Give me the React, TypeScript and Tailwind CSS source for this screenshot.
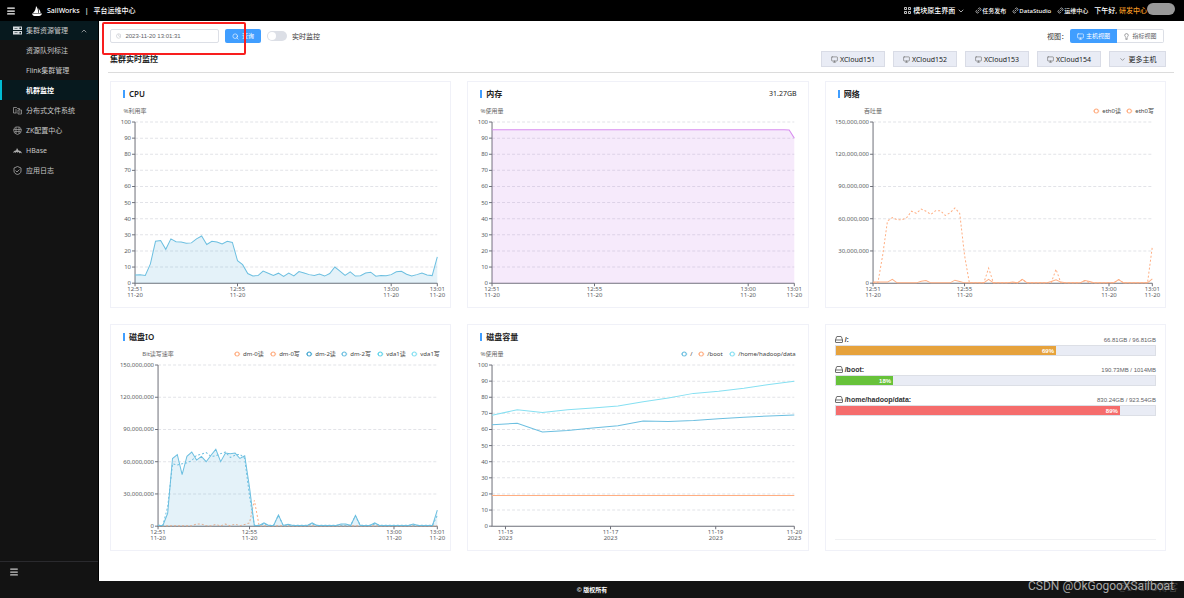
import React from "react";
import {
  ChevronDown,
  ChevronUp,
  Clock,
  Lightbulb,
  Link2,
  Menu,
  Monitor,
  Search,
} from "lucide-react";

type Series = {
  data: number[];
  color: string;
  dashed?: boolean;
  fill?: string;
};

type LegendItem = { label: string; color: string; x: number };
type XTick = { at: number; top: string; bottom: string };

type ChartProps = {
  name: string;
  left: number;
  max: number;
  step: number;
  series: Series[];
  xTicks: XTick[];
  legend?: LegendItem[];
};

const ORANGE = "#ffae82";
const BLUE = "#6cbfe0";
const CYAN = "#86e0f2";

const TOP = 17;
const BOTTOM = 178;
const RIGHT = 326;

const cpu = [
  5, 5.2, 4.8, 12, 26, 26.5, 21, 27.5, 25.7, 25.5, 24.8, 25, 27.5, 29.3, 24,
  26, 25.5, 24.3, 26, 25.3, 14, 11.5, 6, 4.5, 4.7, 7.5, 6.2, 4.8, 6.2, 4.2,
  6.2, 4.5, 7.2, 6.3, 5.3, 4.7, 5.7, 4.4, 6, 10, 7.5, 4.8, 7, 4.4, 4.6, 6.3,
  6.8, 4.3, 4.8, 4.6, 5.3, 7.1, 7.4, 5.5, 4.4, 5.3, 6.3, 5.1, 4.7, 16.3,
];

const memory = [...Array(58).fill(95.2), 95, 90];

// mostly idle series: a base level with a few readings, in millions
function sparse(base: number, points: Record<number, number>) {
  return Array.from({ length: 59 }, (_, i) => (points[i] ?? base) * 1000000);
}

const netRead = sparse(0.3, {
  0: 1, 1: 1, 2: 1, 3: 1, 4: 3.5, 10: 1.8, 11: 2.4, 17: 2.8, 18: 1.6, 24: 3.6,
  29: 1, 31: 3.5, 37: 1.6, 38: 3.2, 39: 1, 44: 2.4, 45: 1.6, 51: 3.4, 58: 4,
});

const netWrite = sparse(0.3, {
  2: 26, 3: 58, 4: 61, 5: 59, 6: 59, 7: 61, 8: 67, 9: 65, 10: 69, 11: 67,
  12: 64, 13: 67.5, 14: 67.5, 15: 63, 16: 65.5, 17: 70, 18: 65, 19: 26,
  24: 14, 31: 3.5, 38: 13, 44: 2.4, 51: 3.4, 58: 34,
});

const dm2Read = sparse(0.6, {
  2: 12, 3: 63, 4: 66.5, 5: 48, 6: 65, 7: 69, 8: 61.5, 9: 65, 10: 60, 11: 66,
  12: 71.5, 13: 60, 14: 68, 15: 67.5, 16: 68, 17: 63, 18: 65.5, 19: 36,
  22: 3, 25: 10.5, 27: 1.8, 32: 3, 38: 2, 39: 2, 41: 10, 45: 3, 53: 2, 58: 15,
});

const dm2Write = sparse(0.8, {
  2: 18, 3: 58, 4: 57, 5: 58, 6: 59, 7: 61, 8: 66, 9: 67, 10: 68.5, 11: 65,
  12: 65.5, 13: 67.5, 14: 69, 15: 64, 16: 66, 17: 67, 18: 63, 19: 28, 22: 2,
  25: 10, 32: 2, 41: 9.5, 45: 2, 58: 10,
});

const dm0Write = sparse(0.3, {
  8: 2, 9: 2, 10: 0.5, 12: 1.6, 14: 2, 16: 2, 18: 1.6, 19: 3, 20: 24,
});

const rootUsed = [63, 63.8, 58.5, 59.3, 60.9, 62.3, 65.2, 65, 65.6, 66.6, 67.6, 68.4, 69];
const dataUsed = [68.8, 72.2, 70.5, 72.2, 73.3, 74.6, 77.2, 79.6, 82.4, 83.7, 85.6, 87.9, 90];

const cpuTicks: XTick[] = [
  { at: 0, top: "12:51", bottom: "11-20" },
  { at: 20 / 59, top: "12:55", bottom: "11-20" },
  { at: 50 / 59, top: "13:00", bottom: "11-20" },
  { at: 1, top: "13:01", bottom: "11-20" },
];

const ioTicks: XTick[] = [
  { at: 0, top: "12:51", bottom: "11-20" },
  { at: 19 / 58, top: "12:55", bottom: "11-20" },
  { at: 49 / 58, top: "13:00", bottom: "11-20" },
  { at: 1, top: "13:01", bottom: "11-20" },
];

const dayTicks: XTick[] = [
  { at: 0.0445, top: "11-15", bottom: "2023" },
  { at: 0.392, top: "11-17", bottom: "2023" },
  { at: 0.74, top: "11-19", bottom: "2023" },
  { at: 1, top: "11-20", bottom: "2023" },
];

function Chart({ name, left, max, step, series, xTicks, legend = [] }: ChartProps) {
  const y = (v: number) => BOTTOM - (v / max) * (BOTTOM - TOP);
  const levels = Array.from({ length: max / step + 1 }, (_, i) => i * step);

  return (
    <svg viewBox="0 0 339 202" className="block w-full text-[6px]" role="img" aria-label={name}>
      <text x={left} y="8" textAnchor="middle" fill="#666">
        {name}
      </text>
      {legend.map((item) => (
        <g key={item.label}>
          <path d={`M${item.x - 3} 6h6`} stroke={item.color} />
          <circle cx={item.x} cy="6" r="2" fill="#fff" stroke={item.color} />
          <text x={item.x + 6} y="8" fill="#444">
            {item.label}
          </text>
        </g>
      ))}
      {levels.map((v) => (
        <g key={v}>
          {v > 0 && (
            <path d={`M${left} ${y(v)}H${RIGHT}`} stroke="#e2e3e8" strokeDasharray="3 2" />
          )}
          <path d={`M${left - 3} ${y(v)}h3`} stroke="#6e7079" />
          <text x={left - 4} y={y(v) + 2} textAnchor="end" fill="#5a5c63">
            {v.toLocaleString("en-US")}
          </text>
        </g>
      ))}
      <path d={`M${left} ${TOP}V${BOTTOM}H${RIGHT}`} fill="none" stroke="#6e7079" />
      {series.map((s, i) => {
        const line = s.data
          .map((v, j) => `${left + (j / (s.data.length - 1)) * (RIGHT - left)},${y(v)}`)
          .join(" ");
        return (
          <g key={i}>
            {s.fill && (
              <polygon
                points={`${left},${BOTTOM} ${line} ${RIGHT},${BOTTOM}`}
                fill={s.fill}
                fillOpacity="0.16"
              />
            )}
            <polyline
              points={line}
              fill="none"
              stroke={s.color}
              strokeDasharray={s.dashed ? "2 2" : undefined}
            />
          </g>
        );
      })}
      {xTicks.map((t) => {
        const x = left + t.at * (RIGHT - left);
        return (
          <g key={t.top} textAnchor="middle" fill="#5a5c63">
            <path d={`M${x} ${BOTTOM}v3`} stroke="#6e7079" />
            <text x={x} y="186">
              {t.top}
            </text>
            <text x={x} y="192">
              {t.bottom}
            </text>
          </g>
        );
      })}
    </svg>
  );
}

function Panel({
  title,
  extra,
  children,
}: {
  title: string;
  extra?: string;
  children: React.ReactNode;
}) {
  return (
    <section className="border border-[#f0f1f8]">
      <header className="flex h-[23px] items-center gap-1 pl-3 pr-[11px]">
        <span className="h-2 w-0.5 bg-[#409eff]" />
        <h2 className="text-[8px] font-semibold text-[#222]">{title}</h2>
        {extra && <span className="ml-auto text-[7px] text-[#222]">{extra}</span>}
      </header>
      {children}
    </section>
  );
}

function Sailboat() {
  return (
    <svg viewBox="0 0 20 20" className="h-[10px] w-[10px]" fill="#fff">
      <path d="M8 0c3 4 5 9 4 14H2C6 10 8 5 8 0z" />
      <path d="M12 4c3 3 5 6 5 10h-4c1-3 1-7-1-10z" />
      <path d="M0 15h20c-1 3-3 5-6 5H5c-3 0-4-2-5-5z" />
    </svg>
  );
}

function ServerIcon() {
  return (
    <svg viewBox="0 0 18 18" className="h-[9px] w-[9px]" fill="#d5dadd">
      <path fillRule="evenodd" d="M0 1h18v7H0zM3 4v1h6V4zM13 3v3h3V3z" />
      <path fillRule="evenodd" d="M0 10h18v7H0zM3 13v1h6v-1zM13 12v3h3v-3z" />
    </svg>
  );
}

function FilesIcon() {
  return (
    <svg viewBox="0 0 18 18" className="h-[9px] w-[9px]" fill="none" stroke="#999" strokeWidth="1.6">
      <path d="M7 14H1V3h6l2 2h4v3M6 6v8M10 8h7v8h-7zM12 12h3" />
    </svg>
  );
}

function ClusterIcon() {
  return (
    <svg viewBox="0 0 18 18" className="h-[9px] w-[9px]" fill="none" stroke="#999" strokeWidth="1.6">
      <path d="M5 2h8l4 5-2 7-6 3-6-3-2-7zM2 7h14M3 11h12M6 2v13M12 2v13" />
    </svg>
  );
}

function WhaleIcon() {
  return (
    <svg viewBox="0 0 18 18" className="h-[9px] w-[9px]" fill="#aaa">
      <path d="M0 14c1-4 4-5 6-5l2-5 3 5c3 0 6 2 7 6-3-2-4-2-5 0-1-3-3-4-4-1-1-3-3-3-4 0-1-2-3-2-5 0z" />
    </svg>
  );
}

function ShieldIcon() {
  return (
    <svg viewBox="0 0 18 18" className="h-[9px] w-[9px]" fill="none" stroke="#aaa" strokeWidth="1.6">
      <path d="M9 1l7 3v6c0 4-3 6-7 7-4-1-7-3-7-7V4zM5 9l3 3 5-5" />
    </svg>
  );
}

function GridIcon() {
  return (
    <svg viewBox="0 0 14 14" className="h-[7px] w-[7px]" fill="none" stroke="#fff" strokeWidth="1.5">
      <path d="M1 1h4v4H1zM9 1h4v4H9zM1 9h4v4H1zM9 9h4v4H9z" />
    </svg>
  );
}

function DiskIcon() {
  return (
    <svg viewBox="0 0 16 14" className="h-[7px] w-2" fill="none" stroke="#333" strokeWidth="1.4">
      <path d="M1 8l2-6q.4-1 1-1h8q.6 0 1 1l2 6v4q0 1-1 1H2q-1 0-1-1zM1 8h14" />
    </svg>
  );
}

function TopBar() {
  return (
    <header className="flex h-[21px] items-center bg-black pl-[6px] pr-[9px] text-[7px] font-medium text-white">
      <button aria-label="菜单">
        <Menu size={10} strokeWidth={3} />
      </button>
      <div className="ml-4 flex items-center gap-[5px]">
        <Sailboat />
        <span>SailWorks</span>
        <span>|</span>
        <span>平台运维中心</span>
      </div>
      <nav className="ml-auto flex items-center gap-[6px]">
        <button className="mr-1 flex items-center gap-0.5">
          <GridIcon />
          模块原生界面
          <ChevronDown size={8} />
        </button>
        {["任务发布", "DataStudio", "运维中心"].map((label) => (
          <a key={label} href="#" className="flex items-center text-[6px]">
            <Link2 size={7} className="-rotate-45" />
            {label}
          </a>
        ))}
        <span className="flex items-center">
          下午好,&nbsp;
          <span className="text-[#f59a23]">研发中心</span>
          <span className="mb-1 h-3 w-7 rounded-full bg-[#999]" />
        </span>
      </nav>
    </header>
  );
}

const subItems = ["资源队列标注", "Flink集群管理", "机群监控"];
const menuItems = [
  { label: "分布式文件系统", icon: <FilesIcon /> },
  { label: "ZK配置中心", icon: <ClusterIcon /> },
  { label: "HBase", icon: <WhaleIcon /> },
  { label: "应用日志", icon: <ShieldIcon /> },
];

function Sidebar() {
  return (
    <aside className="flex w-[99px] shrink-0 flex-col border-r border-black bg-[#131313] text-[7px] text-[#c8c8c8]">
      <nav className="flex-1">
        <button className="flex h-[19px] w-full items-center gap-1 bg-[#07191e] pl-[13px] pr-[10px]">
          <ServerIcon />
          集群资源管理
          <ChevronUp size={8} className="ml-auto" />
        </button>
        {subItems.map((label) => (
          <a
            key={label}
            href="#"
            className={
              label === "机群监控"
                ? "flex h-5 items-center border-l-2 border-[#00bcd4] bg-[#07191e] pl-6 font-semibold text-white"
                : "flex h-5 items-center pl-[26px]"
            }
          >
            {label}
          </a>
        ))}
        {menuItems.map((item) => (
          <a key={item.label} href="#" className="flex h-5 items-center gap-1 pl-[13px]">
            {item.icon}
            {item.label}
          </a>
        ))}
      </nav>
      <div className="flex h-5 items-center border-t border-[#2a2a2e] pl-[9px]">
        <button aria-label="收起">
          <Menu size={10} strokeWidth={3} />
        </button>
      </div>
    </aside>
  );
}

function Toolbar() {
  return (
    <div className="relative flex h-[14px] items-center text-[7px] text-[#333]">
      <label className="flex h-[14px] w-[109px] items-center gap-1 rounded-xs border border-[#dcdfe6] pl-[5px]">
        <Clock size={6} color="#b0b4bc" />
        <input
          aria-label="时间"
          defaultValue="2023-11-20 13:01:31"
          className="w-full min-w-0 font-['Liberation_Sans',sans-serif] text-[6px] text-[#606266] outline-none"
        />
      </label>
      <button className="ml-[6px] flex h-[14px] w-9 items-center justify-center gap-[3px] rounded-xs bg-[#409eff] text-[6px] text-white">
        <Search size={7} />
        查询
      </button>
      <label className="ml-[6px] flex items-center gap-[5px]">
        <input
          type="checkbox"
          className="h-[10px] w-5 appearance-none rounded-full bg-[#dcdfe6] before:m-px before:block before:h-2 before:w-2 before:rounded-full before:bg-white"
        />
        实时监控
      </label>
      <div className="ml-auto mr-0.5 flex items-center">
        <span className="mr-0.5">视图：</span>
        <button className="flex h-[14px] w-[47px] items-center justify-center gap-0.5 rounded-l-xs bg-[#409eff] text-[6px] text-white">
          <Monitor size={7} />
          主机视图
        </button>
        <button className="flex h-[14px] w-[47px] items-center justify-center gap-0.5 rounded-r-xs border border-l-0 border-[#dcdfe6] text-[6px] text-[#606266]">
          <Lightbulb size={7} />
          指标视图
        </button>
      </div>
      <div className="pointer-events-none absolute -left-2 -top-[7px] h-[33px] w-36 rounded-xs border-2 border-[#f81e1e]" />
    </div>
  );
}

function HostBar() {
  return (
    <div className="-ml-0.5 -mr-2 mt-2 flex items-center gap-2 border-b border-[#dcdcdc] pb-[5px] pl-0.5 pr-2 text-[7px] text-[#222]">
      <h1 className="mr-auto text-[8px] font-semibold">集群实时监控</h1>
      {["XCloud151", "XCloud152", "XCloud153", "XCloud154"].map((host) => (
        <button
          key={host}
          className="flex h-4 w-16 items-center justify-center gap-0.5 border border-[#d9dce6] bg-[#e9ecf5]"
        >
          <Monitor size={7} color="#666" />
          {host}
        </button>
      ))}
      <button className="flex h-4 w-[57px] items-center justify-center gap-[3px] border border-[#d9dce6] bg-[#e9ecf5]">
        <ChevronDown size={7} color="#666" />
        更多主机
      </button>
    </div>
  );
}

const disks = [
  { path: "/", usage: "66.81GB / 96.81GB", percent: 69, color: "#e6a23c" },
  { path: "/boot", usage: "190.73MB / 1014MB", percent: 18, color: "#67c23a" },
  { path: "/home/hadoop/data", usage: "830.24GB / 923.54GB", percent: 89, color: "#f56c6c" },
];

function DiskPanel() {
  return (
    <section className="flex flex-col border border-[#f0f1f8] px-[9px] pb-[10px] pt-[9px] font-['Liberation_Sans',sans-serif]">
      <div className="flex flex-1 flex-col gap-2 border-b border-[#f0f1f3]">
        {disks.map((disk) => (
          <div key={disk.path}>
            <div className="flex h-[11px] items-center text-[6px] text-[#606266]">
              <DiskIcon />
              <span className="ml-0.5 text-[7px] font-bold text-[#303133]">{disk.path}:</span>
              <span className="ml-auto">{disk.usage}</span>
            </div>
            <div className="h-[11px] border border-[#dcdfe6] bg-[#e9ecf5]">
              <div
                className="flex h-full items-center justify-end pr-0.5 text-[6px] font-bold text-white"
                style={{ width: `${disk.percent}%`, backgroundColor: disk.color }}
              >
                {disk.percent}%
              </div>
            </div>
          </div>
        ))}
      </div>
    </section>
  );
}

function App() {
  return (
    <div className="relative flex min-h-screen flex-col bg-white font-['Noto_Sans','Noto_Sans_CJK_SC',sans-serif] leading-none">
      <TopBar />
      <div className="flex flex-1">
        <Sidebar />
        <main className="min-w-0 flex-1 pb-[30px] pl-[11px] pr-[18px] pt-2">
          <Toolbar />
          <HostBar />
          <div className="mt-2 grid grid-cols-3 gap-4">
            <Panel title="CPU">
              <Chart
                name="%利用率"
                left={24}
                max={100}
                step={10}
                xTicks={cpuTicks}
                series={[{ data: cpu, color: BLUE, fill: "#5ab1d8" }]}
              />
            </Panel>
            <Panel title="内存" extra="31.27GB">
              <Chart
                name="%使用量"
                left={24}
                max={100}
                step={10}
                xTicks={cpuTicks}
                series={[{ data: memory, color: "#d78df0", fill: "#c77ee8" }]}
              />
            </Panel>
            <Panel title="网络">
              <Chart
                name="吞吐量"
                left={47}
                max={150000000}
                step={30000000}
                xTicks={ioTicks}
                legend={[
                  { label: "eth0读", color: ORANGE, x: 270 },
                  { label: "eth0写", color: ORANGE, x: 303 },
                ]}
                series={[
                  { data: netRead, color: ORANGE },
                  { data: netWrite, color: ORANGE, dashed: true },
                ]}
              />
            </Panel>
            <Panel title="磁盘IO">
              <Chart
                name="Bit读写速率"
                left={47}
                max={150000000}
                step={30000000}
                xTicks={ioTicks}
                legend={[
                  { label: "dm-0读", color: ORANGE, x: 126 },
                  { label: "dm-0写", color: ORANGE, x: 162 },
                  { label: "dm-2读", color: "#43a6d0", x: 198 },
                  { label: "dm-2写", color: BLUE, x: 233 },
                  { label: "vda1读", color: "#5fd3ea", x: 269 },
                  { label: "vda1写", color: CYAN, x: 303 },
                ]}
                series={[
                  { data: dm0Write, color: ORANGE, dashed: true },
                  { data: dm2Read, color: BLUE, fill: "#5ab1d8" },
                  { data: dm2Write, color: BLUE, dashed: true },
                ]}
              />
            </Panel>
            <Panel title="磁盘容量">
              <Chart
                name="%使用量"
                left={24}
                max={100}
                step={10}
                xTicks={dayTicks}
                legend={[
                  { label: "/", color: BLUE, x: 216 },
                  { label: "/boot", color: ORANGE, x: 233 },
                  { label: "/home/hadoop/data", color: CYAN, x: 264 },
                ]}
                series={[
                  { data: rootUsed, color: BLUE },
                  { data: Array(13).fill(19), color: ORANGE },
                  { data: dataUsed, color: CYAN },
                ]}
              />
            </Panel>
            <DiskPanel />
          </div>
        </main>
      </div>
      <footer className="flex h-[17px] items-center justify-center bg-[#131313] text-[6px] font-semibold text-white">
        © 版权所有
      </footer>
      <span className="absolute bottom-[6px] right-[6px] text-[10px] text-[#444]">@51CTO博客</span>
      <span className="absolute bottom-[6px] right-[10px] font-[Roboto,sans-serif] text-[12px] text-[#aaa]">
        CSDN @OkGogooXSailboat
      </span>
    </div>
  );
}

export default App;
